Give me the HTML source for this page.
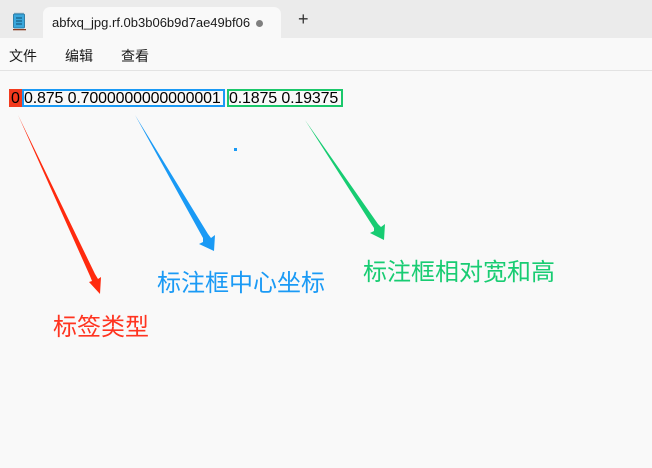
<!DOCTYPE html>
<html><head><meta charset="utf-8"><style>
*{margin:0;padding:0;box-sizing:border-box}
body{width:652px;height:468px;overflow:hidden;background:#f9f9f9;font-family:"Liberation Sans","Noto Sans CJK SC",sans-serif;position:relative}
.top{position:absolute;left:0;top:0;width:652px;height:38px;background:#ebebeb}
.tab{position:absolute;left:43px;top:7px;width:238px;height:32px;background:#f9f9f9;border-radius:7px 7px 0 0;font-size:13px;color:#1a1a1a}
.tab span{position:absolute;left:9px;top:8px}
.dot{position:absolute;left:213px;top:13px;width:7px;height:7px;border-radius:50%;background:#808080}
.plus{position:absolute;left:298px;top:9px;font-size:18px;color:#333}
.menu{position:absolute;top:46px;font-size:14px;color:#1a1a1a}
.sep{position:absolute;left:0;top:70px;width:652px;height:1px;background:#e3e3e3}
.line{position:absolute;top:90px;font-size:16px;color:#000;height:18px;line-height:18px;white-space:nowrap;letter-spacing:-0.15px}
.b{position:absolute;border:2px solid;height:18px;top:89px}
.lbl{position:absolute;font-size:24px;white-space:nowrap}
</style></head><body>
<div class="top"></div>
<svg style="position:absolute;left:12px;top:12px" width="16" height="20" viewBox="0 0 16 20">
<rect x="1.5" y="2" width="11" height="14" rx="1" fill="#3aa7dc" stroke="#1b6e99" stroke-width="0.8"/>
<rect x="1" y="17" width="13" height="1.3" fill="#8a3d22"/>
<path d="M4 6h6M4 9h6M4 12h6" stroke="#0e4d70" stroke-width="1"/>
<path d="M3 2V0.8M5 2V0.8M7 2V0.8M9 2V0.8M11 2V0.8" stroke="#1b6e99" stroke-width="0.8"/>
</svg>
<div class="tab"><span>abfxq_jpg.rf.0b3b06b9d7ae49bf06</span><div class="dot"></div></div>
<div class="plus">+</div>
<div class="menu" style="left:9px">文件</div>
<div class="menu" style="left:65px">编辑</div>
<div class="menu" style="left:121px">查看</div>
<div class="sep"></div>
<div class="b" style="left:9px;width:13px;border-color:#f23a1e;background:#f4391d"></div>
<div class="b" style="left:22px;width:203px;border-color:#1a9af5"></div>
<div class="b" style="left:227px;width:116px;border-color:#1bc86b"></div>
<div class="line" style="left:11px">0</div>
<div class="line" style="left:24px">0.875 0.7000000000000001</div>
<div class="line" style="left:229px">0.1875 0.19375</div>
<div style="position:absolute;left:234px;top:148px;width:3px;height:3px;background:#1a9af5"></div>
<svg style="position:absolute;left:0;top:0" width="652" height="468">
<polygon points="18,115 95,274 98,279 101,277 100,294 89,282 92,281 90,276" fill="#ff2a0e"/>
<polygon points="135,115 208,234 211,238 215,235 214,251 199,244 203,242 203,238" fill="#1a9af5"/>
<polygon points="305,120 378,224 381,227 385,224 384,240 370,233 374,231 374,228" fill="#17cc72"/>
</svg>
<div class="lbl" style="left:53px;top:307px;color:#ff3420">标签类型</div>
<div class="lbl" style="left:157px;top:263px;color:#1a9af5">标注框中心坐标</div>
<div class="lbl" style="left:363px;top:252px;color:#18cc72">标注框相对宽和高</div>
</body></html>
